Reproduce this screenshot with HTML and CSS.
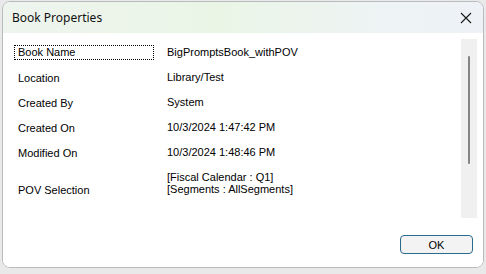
FILE: index.html
```html
<!DOCTYPE html>
<html>
<head>
<meta charset="utf-8">
<link rel="stylesheet" href="styles.css">
</head>
<body>
<div class="window">
  <div class="titlebar">
    <span class="title">Book Properties</span>
    <span class="close">
      <svg width="12" height="12" viewBox="0 0 12 12"><path d="M1 1L11 11M11 1L1 11" stroke="#1a1a1a" stroke-width="1.1" fill="none"/></svg>
    </span>
  </div>
  <div class="client">
    <div class="main">
      <div class="panel">
        <div class="row"><div class="label focus">Book Name</div><div class="value">BigPromptsBook_withPOV</div></div>
        <div class="row"><div class="label">Location</div><div class="value">Library/Test</div></div>
        <div class="row"><div class="label">Created By</div><div class="value">System</div></div>
        <div class="row"><div class="label">Created On</div><div class="value">10/3/2024 1:47:42 PM</div></div>
        <div class="row"><div class="label">Modified On</div><div class="value">10/3/2024 1:48:46 PM</div></div>
        <div class="row multi"><div class="label">POV Selection</div><div class="value">[Fiscal Calendar : Q1]<br>[Segments : AllSegments]</div></div>
      </div>
      <div class="scroll"><div class="thumb"></div></div>
    </div>
    <div class="footer">
      <button class="ok">OK</button>
    </div>
  </div>
</div>
</body>
</html>
```
FILE: styles.css
```css
html, body {
  margin: 0;
  padding: 0;
}
body {
  width: 486px;
  height: 274px;
  background: #e9e9e9;
  overflow: hidden;
  font-family: "Liberation Sans", Arial, sans-serif;
}
.window {
  margin: 1px 0 0 2px;
  width: 480px;
  height: 265px;
  border: 1px solid #b9bcbe;
  border-radius: 8px;
  overflow: hidden;
  display: flex;
  flex-direction: column;
  background: #ffffff;
}
.titlebar {
  height: 31px;
  flex: none;
  display: flex;
  align-items: center;
  justify-content: space-between;
  background: linear-gradient(90deg, #eef4ee 0%, #eaf5e6 45%, #eef3f5 80%, #eef2f6 100%);
}
.title {
  font-family: "Segoe UI", "Noto Sans", "Open Sans", sans-serif;
  font-size: 12px;
  color: #111;
  padding-left: 9px;
  padding-bottom: 1px;
}
.close {
  width: 12px;
  height: 12px;
  margin-right: 11px;
  display: flex;
}
.client {
  flex: 1;
  display: flex;
  flex-direction: column;
  background: #ffffff;
}
.main {
  display: flex;
  margin-top: 6px;
  height: 179px;
}
.panel {
  flex: 1;
  padding: 1px 0 0 11px;
  font-size: 11px;
  color: #000;
}
.row {
  height: 25px;
  display: flex;
  align-items: center;
}
.label {
  width: 140px;
  height: 15px;
  box-sizing: border-box;
  padding-left: 3px;
  line-height: 15px;
  border: 1px solid transparent;
}
.label.focus {
  border: 1px dotted #000;
  line-height: 13px;
}
.value {
  margin-left: 13px;
  line-height: 13px;
}
.row.multi {
  height: 37px;
  align-items: flex-start;
}
.row.multi .label {
  margin-top: 17px;
}
.row.multi .value {
  margin-top: 6px;
  line-height: 12px;
}
.scroll {
  width: 16px;
  margin-right: 6px;
  background: #f0f0f0;
  display: flex;
  justify-content: center;
  padding-top: 17px;
  box-sizing: border-box;
}
.thumb {
  width: 2px;
  height: 108px;
  background: #858585;
  border-radius: 1px;
}
.footer {
  display: flex;
  justify-content: flex-end;
  padding: 17px 10px 0 0;
}
.ok {
  width: 73px;
  height: 19px;
  box-sizing: border-box;
  border: 1px solid #2a6a8a;
  border-radius: 4px;
  background: #f3f3f3;
  font-family: "Liberation Sans", Arial, sans-serif;
  font-size: 11px;
  color: #000;
  padding: 0;
}
```
